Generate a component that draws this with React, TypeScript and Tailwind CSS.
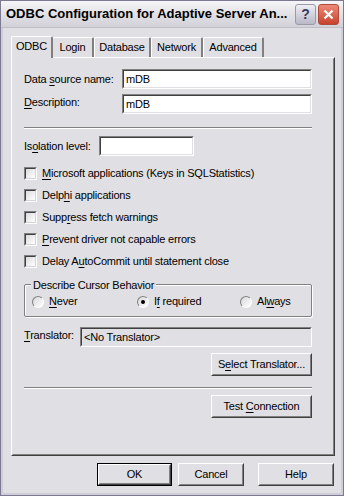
const font = "font-['Liberation_Sans',Arial,sans-serif] text-[11px] tracking-[-0.2px] text-black"

const U = ({ children }: { children: string }) => <span className="underline underline-offset-[2px]">{children}</span>

const Sunken = ({ className = "", children }: { className?: string; children?: React.ReactNode }) => (
    <div className={`border border-t-[#808080] border-l-[#808080] border-b-white border-r-white ${className}`}>
        <div className="h-full w-full border border-t-[#404040] border-l-[#404040] border-b-[#e0dfe3] border-r-[#e0dfe3] flex items-center px-[2px]">
            <span>{children}</span>
        </div>
    </div>
)

const Button = ({ w, children, def = false }: { w: string; children: React.ReactNode; def?: boolean }) => (
    <div className={`${w} h-[23px] ${def ? "border border-black" : ""}`}>
        <div className="h-full w-full border border-t-white border-l-white border-b-[#404040] border-r-[#404040]">
            <div className="h-full w-full border border-t-[#e0dfe3] border-l-[#e0dfe3] border-b-[#808080] border-r-[#808080] flex items-center justify-center">
                <span>{children}</span>
            </div>
        </div>
    </div>
)

const Check = ({ children }: { children: React.ReactNode }) => (
    <div className="flex items-center h-[22px]">
        <div className="w-[13px] h-[13px] border border-t-[#808080] border-l-[#808080] border-b-white border-r-white">
            <div className="h-full w-full border border-t-[#404040] border-l-[#404040] border-b-[#d4d3d8] border-r-[#d4d3d8] bg-gradient-to-br from-[#dcdbe0] to-white" />
        </div>
        <span className="ml-[5px]">{children}</span>
    </div>
)

const Radio = ({ on = false, children }: { on?: boolean; children: React.ReactNode }) => (
    <div className="flex items-center">
        <div className="w-[12px] h-[12px] rounded-full border border-t-[#808080] border-l-[#808080] border-b-white border-r-white bg-gradient-to-br from-[#d8d7dc] to-white flex items-center justify-center">
            {on && <div className="w-[4px] h-[4px] rounded-full bg-black" />}
        </div>
        <span className="ml-[5px]">{children}</span>
    </div>
)

const Sep = () => (
    <div className="h-[2px] border-t border-t-[#808080] border-b border-b-white" />
)

const tabs = ["ODBC", "Login", "Database", "Network", "Advanced"]
const tabW = ["w-[40px]", "w-[42px]", "w-[57px]", "w-[52px]", "w-[61px]"]

export default function App() {
    return (
        <div className={`w-[344px] h-[496px] border border-[#7c7a90] ${font}`}>
            <div className="h-full w-full border-2 border-[#cfcdd9] border-t-0 bg-[#e0dfe3] flex flex-col">
                {/* title bar */}
                <div className="h-[27px] -mx-[2px] bg-gradient-to-b from-[#f6f6f8] via-[#e2e1e6] to-[#d2d1d8] flex items-center pl-[5px] pr-[4px] border-b border-[#c0bfc8]">
                    <span className="font-bold text-[13px] tracking-normal text-black flex-1">ODBC Configuration for Adaptive Server An...</span>
                    <div className="w-[21px] h-[21px] rounded-[3px] border border-[#9a9aa8] bg-gradient-to-b from-[#eeeef4] to-[#b8b8c8] flex items-center justify-center text-[#3a3a5a] font-bold text-[14px]">?</div>
                    <div className="ml-[2px] w-[21px] h-[21px] rounded-[3px] border border-[#b04a3a] bg-gradient-to-b from-[#ec8a78] to-[#c8412c] flex items-center justify-center">
                        <svg width="11" height="11" viewBox="0 0 11 11">
                            <path d="M1.5 1.5 L9.5 9.5 M9.5 1.5 L1.5 9.5" stroke="white" strokeWidth="2.2" />
                        </svg>
                    </div>
                </div>

                <div className="flex-1 flex flex-col px-[6px]">
                    {/* tabs */}
                    <div className="flex items-end h-[29px] pl-[4px]">
                        {tabs.map((t, i) => (
                            <div
                                key={t}
                                className={`${i === 0 ? "h-[22px] -mb-[1px] bg-[#e0dfe3] relative z-10 -ml-[2px] -mr-[1px] w-[42px] pb-[3px]" : `h-[20px] ${tabW[i]}`} border-t border-l border-t-white border-l-white border-r-2 border-r-[#808080] rounded-t-[2px] flex items-center justify-center`}
                            >
                                {t}
                            </div>
                        ))}
                    </div>

                    {/* panel */}
                    <div className="h-[399px] ml-[2px] border border-t-white border-l-white border-b-[#404040] border-r-[#404040]">
                        <div className="h-full border border-transparent border-b-[#808080] border-r-[#808080] flex flex-col pl-[11px] pr-[21px] pt-[10px]">
                            <div className="flex items-center h-[20px]">
                                <span className="w-[98px]">Data <U>s</U>ource name:</span>
                                <Sunken className="flex-1 h-[20px] bg-white">mDB</Sunken>
                            </div>
                            <div className="flex items-center h-[20px] mt-[5px]">
                                <span className="w-[98px] -mt-[4px]"><U>D</U>escription:</span>
                                <Sunken className="flex-1 h-[20px] bg-white">mDB</Sunken>
                            </div>
                            <div className="mt-[13px]"><Sep /></div>
                            <div className="flex items-center h-[20px] mt-[7px]">
                                <span className="w-[75px]">Is<U>o</U>lation level:</span>
                                <Sunken className="w-[95px] h-[20px] bg-white" />
                            </div>
                            <div className="mt-[6px] flex flex-col">
                                <Check><U>M</U>icrosoft applications (Keys in SQLStatistics)</Check>
                                <Check>Delp<U>h</U>i applications</Check>
                                <Check>Supp<U>r</U>ess fetch warnings</Check>
                                <Check><U>P</U>revent driver not capable errors</Check>
                                <Check>Delay A<U>u</U>toCommit until statement close</Check>
                            </div>

                            {/* group box */}
                            <div className="relative mt-[12px] h-[33px] border border-[#808080] shadow-[1px_1px_0_white,inset_1px_1px_0_white] rounded-[2px] flex items-center pl-[7px] pt-[2px]">
                                <span className="absolute -top-[8px] left-[6px] px-[2px] bg-[#e0dfe3]">Describe Cursor Behavior</span>
                                <div className="w-[105px]"><Radio><U>N</U>ever</Radio></div>
                                <div className="w-[103px]"><Radio on>I<U>f</U> required</Radio></div>
                                <Radio>Al<U>w</U>ays</Radio>
                            </div>

                            <div className="flex items-center h-[20px] mt-[10px]">
                                <span className="w-[56px] -mt-[3px]"><U>T</U>ranslator:</span>
                                <Sunken className="flex-1 h-[20px] bg-[#e0dfe3]">&lt;No Translator&gt;</Sunken>
                            </div>
                            <div className="flex justify-end mt-[6px]">
                                <Button w="w-[101px]">S<U>e</U>lect Translator...</Button>
                            </div>
                            <div className="mt-[11px]"><Sep /></div>
                            <div className="flex justify-end mt-[6px]">
                                <Button w="w-[101px]">Test <U>C</U>onnection</Button>
                            </div>
                        </div>
                    </div>

                    {/* bottom buttons */}
                    <div className="flex mt-[7px] pl-[88px]">
                        <Button w="w-[75px]" def>OK</Button>
                        <div className="ml-[6px]"><Button w="w-[66px]">Cancel</Button></div>
                        <div className="ml-[14px]"><Button w="w-[76px]">Help</Button></div>
                    </div>
                </div>
            </div>
        </div>
    )
}
